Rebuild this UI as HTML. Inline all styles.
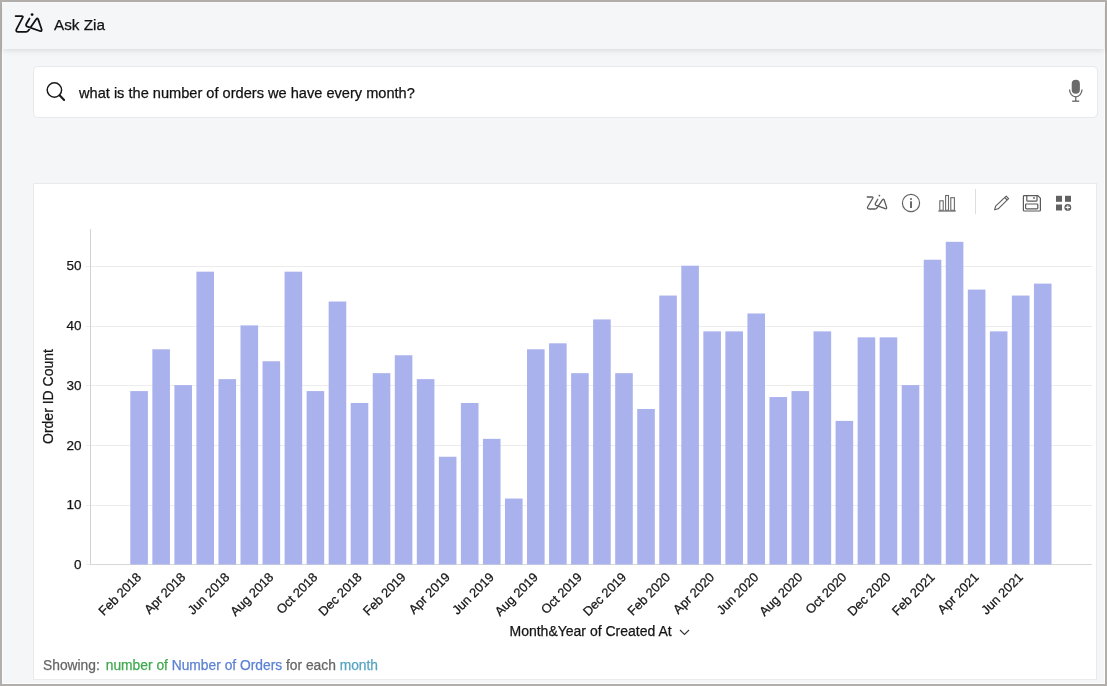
<!DOCTYPE html>
<html><head><meta charset="utf-8"><style>
*{box-sizing:border-box;margin:0;padding:0}
html,body{width:1107px;height:686px;overflow:hidden;background:#b2aeac}
body{position:relative;font-family:"Liberation Sans",sans-serif}
.title,.qtext,.footer{-webkit-text-stroke:0.25px currentColor}
.wrap{position:absolute;left:0;top:0;width:1107px;height:686px;will-change:transform}
.frame{position:absolute;left:2px;top:2px;width:1103px;height:682px;background:#f5f6f8;border:1px solid #fbfcfd}
.header{position:absolute;left:3px;top:3px;width:1101px;height:46px;background:#f5f6f8;box-shadow:0 2px 5px rgba(50,35,25,0.11)}
.title{position:absolute;left:54px;top:16px;font-size:15.3px;color:#111;line-height:18px}
.search{position:absolute;left:33px;top:66px;width:1065px;height:52px;background:#fff;border:1px solid #e8e9ec;border-radius:5px}
.qtext{position:absolute;left:79px;top:85px;font-size:14.6px;color:#111;line-height:17px}
.card{position:absolute;left:33px;top:183px;width:1064px;height:497px;background:#fff;border:1px solid #e9eaec}
.chart{position:absolute;left:0;top:0}
.footer{position:absolute;left:43px;top:657.5px;font-size:13.8px;line-height:16px;color:#666;white-space:nowrap}
.g{color:#3fa94f} .b{color:#5b82d3} .t{color:#56a5c2}
</style></head><body><div class="wrap">
<div class="frame"></div>
<div class="header">
</div>
<svg style="position:absolute;left:0;top:0" width="50" height="50" viewBox="0 0 50 50"><g fill="none" stroke="#111" stroke-width="1.75" stroke-linecap="round" stroke-linejoin="round"><path d="M15.6,16 H21.8 Q23.4,16 22.7,17.4 L16.4,29.4 Q15.6,31.8 18,31.8 H26 Q27.6,31.8 28.6,30.2 L36.2,19.2 Q37.4,17.6 38.2,19.4 L41.6,29.2 Q42.2,31.6 39.8,31 L27.4,26.6 Q25.4,25.8 26.3,24 L29.5,18.5"/></g><circle cx="32.1" cy="14.6" r="1.4" fill="#111"/></svg>
<div class="title">Ask Zia</div>
<div class="search"></div>
<svg style="position:absolute;left:40px;top:76px" width="30" height="30" viewBox="40 76 30 30"><circle cx="54.4" cy="90" r="7.2" fill="none" stroke="#1a1a1a" stroke-width="1.5"/><line x1="59.6" y1="95.2" x2="64.1" y2="100" stroke="#1a1a1a" stroke-width="2.1" stroke-linecap="round"/></svg>
<div class="qtext">what is the number of orders we have every month?</div>
<svg style="position:absolute;left:1060px;top:76px" width="30" height="30" viewBox="1060 76 30 30"><rect x="1071.7" y="79.8" width="8.2" height="14" rx="4.1" fill="#6b6b6b"/><path d="M1069.5 89.6 A6.25 7.2 0 0 0 1082 89.6" fill="none" stroke="#6b6b6b" stroke-width="1.3"/><line x1="1075.75" y1="96.5" x2="1075.75" y2="101" stroke="#6b6b6b" stroke-width="1.3"/><line x1="1072.2" y1="101.2" x2="1079.2" y2="101.2" stroke="#6b6b6b" stroke-width="1.4"/></svg>
<div class="card"></div>
<svg class="chart" width="1107" height="686" viewBox="0 0 1107 686">
<g stroke="#ececec" stroke-width="1"><line x1="86" y1="505.5" x2="1092" y2="505.5"/><line x1="86" y1="445.5" x2="1092" y2="445.5"/><line x1="86" y1="385.5" x2="1092" y2="385.5"/><line x1="86" y1="326.5" x2="1092" y2="326.5"/><line x1="86" y1="266.5" x2="1092" y2="266.5"/></g>
<line x1="86" y1="564.5" x2="90" y2="564.5" stroke="#ececec" stroke-width="1"/>
<line x1="90.5" y1="229" x2="90.5" y2="565" stroke="#d2d2d2" stroke-width="1"/>
<line x1="90" y1="564.5" x2="1092" y2="564.5" stroke="#d8d8d8" stroke-width="1"/>
<g fill="#aab2ee"><rect x="130.30" y="391.07" width="17.6" height="173.43"/><rect x="152.34" y="349.28" width="17.6" height="215.22"/><rect x="174.38" y="385.10" width="17.6" height="179.40"/><rect x="196.42" y="271.67" width="17.6" height="292.83"/><rect x="218.46" y="379.13" width="17.6" height="185.37"/><rect x="240.50" y="325.40" width="17.6" height="239.10"/><rect x="262.54" y="361.22" width="17.6" height="203.28"/><rect x="284.58" y="271.67" width="17.6" height="292.83"/><rect x="306.62" y="391.07" width="17.6" height="173.43"/><rect x="328.66" y="301.52" width="17.6" height="262.98"/><rect x="350.70" y="403.01" width="17.6" height="161.49"/><rect x="372.74" y="373.16" width="17.6" height="191.34"/><rect x="394.78" y="355.25" width="17.6" height="209.25"/><rect x="416.82" y="379.13" width="17.6" height="185.37"/><rect x="438.86" y="456.74" width="17.6" height="107.76"/><rect x="460.90" y="403.01" width="17.6" height="161.49"/><rect x="482.94" y="438.83" width="17.6" height="125.67"/><rect x="504.98" y="498.53" width="17.6" height="65.97"/><rect x="527.02" y="349.28" width="17.6" height="215.22"/><rect x="549.06" y="343.31" width="17.6" height="221.19"/><rect x="571.10" y="373.16" width="17.6" height="191.34"/><rect x="593.14" y="319.43" width="17.6" height="245.07"/><rect x="615.18" y="373.16" width="17.6" height="191.34"/><rect x="637.22" y="408.98" width="17.6" height="155.52"/><rect x="659.26" y="295.55" width="17.6" height="268.95"/><rect x="681.30" y="265.70" width="17.6" height="298.80"/><rect x="703.34" y="331.37" width="17.6" height="233.13"/><rect x="725.38" y="331.37" width="17.6" height="233.13"/><rect x="747.42" y="313.46" width="17.6" height="251.04"/><rect x="769.46" y="397.04" width="17.6" height="167.46"/><rect x="791.50" y="391.07" width="17.6" height="173.43"/><rect x="813.54" y="331.37" width="17.6" height="233.13"/><rect x="835.58" y="420.92" width="17.6" height="143.58"/><rect x="857.62" y="337.34" width="17.6" height="227.16"/><rect x="879.66" y="337.34" width="17.6" height="227.16"/><rect x="901.70" y="385.10" width="17.6" height="179.40"/><rect x="923.74" y="259.73" width="17.6" height="304.77"/><rect x="945.78" y="241.82" width="17.6" height="322.68"/><rect x="967.82" y="289.58" width="17.6" height="274.92"/><rect x="989.86" y="331.37" width="17.6" height="233.13"/><rect x="1011.90" y="295.55" width="17.6" height="268.95"/><rect x="1033.94" y="283.61" width="17.6" height="280.89"/></g>
<g font-family="Liberation Sans, sans-serif" font-size="13.5" fill="#151515" stroke="#151515" stroke-width="0.25" text-anchor="end"><text x="81.6" y="568.9">0</text><text x="81.6" y="509.2">10</text><text x="81.6" y="449.5">20</text><text x="81.6" y="389.8">30</text><text x="81.6" y="330.1">40</text><text x="81.6" y="270.4">50</text></g>
<g font-family="Liberation Sans, sans-serif" font-size="12.8" fill="#151515" stroke="#151515" stroke-width="0.25" text-anchor="end"><text transform="translate(142.1,578) rotate(-45)">Feb 2018</text><text transform="translate(186.2,578) rotate(-45)">Apr 2018</text><text transform="translate(230.3,578) rotate(-45)">Jun 2018</text><text transform="translate(274.3,578) rotate(-45)">Aug 2018</text><text transform="translate(318.4,578) rotate(-45)">Oct 2018</text><text transform="translate(362.5,578) rotate(-45)">Dec 2018</text><text transform="translate(406.6,578) rotate(-45)">Feb 2019</text><text transform="translate(450.7,578) rotate(-45)">Apr 2019</text><text transform="translate(494.7,578) rotate(-45)">Jun 2019</text><text transform="translate(538.8,578) rotate(-45)">Aug 2019</text><text transform="translate(582.9,578) rotate(-45)">Oct 2019</text><text transform="translate(627.0,578) rotate(-45)">Dec 2019</text><text transform="translate(671.1,578) rotate(-45)">Feb 2020</text><text transform="translate(715.1,578) rotate(-45)">Apr 2020</text><text transform="translate(759.2,578) rotate(-45)">Jun 2020</text><text transform="translate(803.3,578) rotate(-45)">Aug 2020</text><text transform="translate(847.4,578) rotate(-45)">Oct 2020</text><text transform="translate(891.5,578) rotate(-45)">Dec 2020</text><text transform="translate(935.5,578) rotate(-45)">Feb 2021</text><text transform="translate(979.6,578) rotate(-45)">Apr 2021</text><text transform="translate(1023.7,578) rotate(-45)">Jun 2021</text></g>
<text transform="translate(53,396.5) rotate(-90)" font-family="Liberation Sans, sans-serif" font-size="14" fill="#151515" stroke="#151515" stroke-width="0.25" text-anchor="middle">Order ID Count</text>
<text x="509.5" y="635.9" font-family="Liberation Sans, sans-serif" font-size="14" fill="#151515" stroke="#151515" stroke-width="0.25">Month&amp;Year of Created At</text>
<path d="M680 630 L684.5 634.5 L689 630" fill="none" stroke="#333" stroke-width="1.1"/>
</svg>
<svg style="position:absolute;left:0;top:0" width="1107" height="230" viewBox="0 0 1107 230">
<g fill="none" stroke="#5a5a5a" stroke-width="1.3" stroke-linecap="round" stroke-linejoin="round"><path d="M867.2,197 H872.2 Q873.4,197 872.9,198 L867.6,207 Q867,209 869,209 H875 Q876.2,209 877,207.8 L882.6,199.6 Q883.5,198.5 884.1,199.8 L886.6,207.4 Q887,209.2 885.2,208.7 L876.2,205.3 Q874.8,204.7 875.4,203.4 L877.8,199.2"/></g><circle cx="879.4" cy="195.6" r="0.9" fill="#5a5a5a"/>
<circle cx="911" cy="203" r="8.6" fill="none" stroke="#646464" stroke-width="1.2"/><rect x="910.1" y="198.2" width="1.8" height="1.6" fill="#5a5a5a"/><rect x="910.1" y="201.3" width="1.8" height="6.7" fill="#5a5a5a"/>
<g fill="none" stroke="#6a6a6a" stroke-width="1.1"><rect x="939.8" y="200.8" width="3.4" height="9.5"/><rect x="945.6" y="195.5" width="2.9" height="14.8"/><rect x="950.8" y="197.7" width="3.6" height="12.6"/></g><rect x="938.3" y="210.3" width="17.5" height="1.4" fill="#777"/>
<line x1="975.5" y1="189" x2="975.5" y2="214" stroke="#dedede" stroke-width="1"/>
<g fill="none" stroke="#5a5a5a" stroke-width="1.1" stroke-linejoin="round"><path d="M994.6,209.8 L995.6,206.2 L1006.2,196.2 L1008.6,198.6 L998.2,208.8 Z"/><line x1="1004.8" y1="197.6" x2="1007.2" y2="200"/></g>
<g fill="none" stroke="#5a5a5a" stroke-width="1.2"><path d="M1024.2,195.6 H1037.8 L1040.4,198.2 V210.2 Q1040.4,211 1039.6,211 H1024.2 Q1023.4,211 1023.4,210.2 V196.4 Q1023.4,195.6 1024.2,195.6 Z"/><path d="M1026.8,195.8 V200.2 Q1026.8,201.2 1027.8,201.2 H1036 Q1037,201.2 1037,200.2 V195.8"/><rect x="1025.6" y="204" width="12.2" height="4.8" rx="0.8"/></g><rect x="1033.2" y="197.2" width="1.6" height="1.6" fill="#5a5a5a"/>
<g fill="#626262"><rect x="1056" y="195.8" width="6" height="6"/><rect x="1065" y="195.8" width="6" height="6"/><rect x="1056" y="204.5" width="6" height="6"/><circle cx="1067.8" cy="207.4" r="3.4"/></g><path d="M1067.8,205.2 V209.6 M1065.6,207.4 H1070" stroke="#fff" stroke-width="1.1"/>
</svg>
<div class="footer">Showing:<span class="g" style="margin-left:6px">number of</span> <span class="b">Number of Orders</span> for each <span class="t">month</span></div>
</div></body></html>
